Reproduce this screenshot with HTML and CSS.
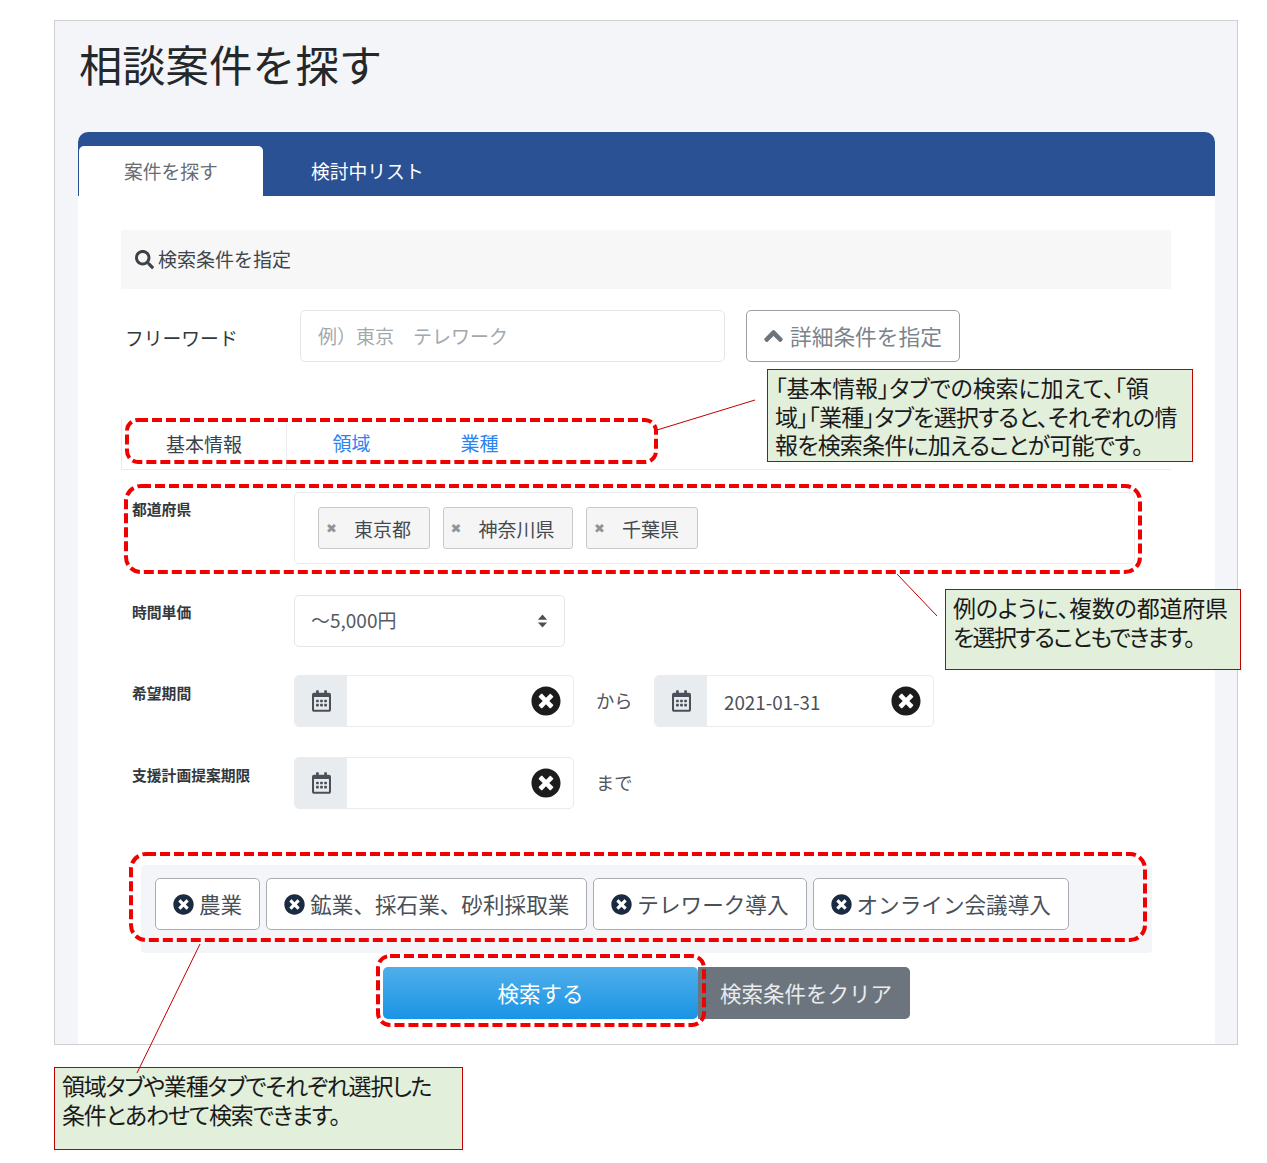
FILE: index.html
```html
<!DOCTYPE html>
<html lang="ja">
<head>
<meta charset="utf-8">
<title>相談案件を探す</title>
<link rel="stylesheet" href="styles.css">
</head>
<body>
<svg class="defs" width="0" height="0" aria-hidden="true">
  <symbol id="i-times" viewBox="0 0 512 512"><path d="M256 8C119 8 8 119 8 256s111 248 248 248 248-111 248-248S393 8 256 8zm121.6 313.1c4.7 4.7 4.7 12.3 0 17L338 377.6c-4.7 4.7-12.3 4.7-17 0L256 312l-65.1 65.6c-4.7 4.7-12.3 4.7-17 0L134.4 338c-4.7-4.7-4.7-12.3 0-17l65.6-65-65.6-65.1c-4.7-4.7-4.7-12.3 0-17l39.6-39.6c4.7-4.7 12.3-4.7 17 0l65 65.7 65.1-65.6c4.7-4.7 12.3-4.7 17 0l39.6 39.6c4.7 4.7 4.7 12.3 0 17L312 256l65.6 65.1z"/></symbol>
  <symbol id="i-cal" viewBox="0 0 448 512"><path d="M148 288h-40c-6.6 0-12-5.4-12-12v-40c0-6.6 5.4-12 12-12h40c6.6 0 12 5.4 12 12v40c0 6.6-5.4 12-12 12zm108-12v-40c0-6.6-5.4-12-12-12h-40c-6.6 0-12 5.4-12 12v40c0 6.6 5.4 12 12 12h40c6.6 0 12-5.4 12-12zm96 0v-40c0-6.6-5.4-12-12-12h-40c-6.6 0-12 5.4-12 12v40c0 6.6 5.4 12 12 12h40c6.6 0 12-5.4 12-12zm-96 96v-40c0-6.6-5.4-12-12-12h-40c-6.6 0-12 5.4-12 12v40c0 6.6 5.4 12 12 12h40c6.6 0 12-5.4 12-12zm-96 0v-40c0-6.6-5.4-12-12-12h-40c-6.6 0-12 5.4-12 12v40c0 6.6 5.4 12 12 12h40c6.6 0 12-5.4 12-12zm192 0v-40c0-6.6-5.4-12-12-12h-40c-6.6 0-12 5.4-12 12v40c0 6.6 5.4 12 12 12h40c6.6 0 12-5.4 12-12zm96-260v352c0 26.5-21.5 48-48 48H48c-26.5 0-48-21.5-48-48V112c0-26.5 21.5-48 48-48h48V12c0-6.6 5.4-12 12-12h40c6.6 0 12 5.4 12 12v52h128V12c0-6.6 5.4-12 12-12h40c6.6 0 12 5.4 12 12v52h48c26.5 0 48 21.5 48 48zm-48 346V160H48v298c0 3.3 2.7 6 6 6h340c3.3 0 6-2.7 6-6z"/></symbol>
</svg>
<div class="page">
  <div class="frame">
    <h1 class="title">相談案件を探す</h1>
    <div class="card">
      <div class="card-tabs">
        <div class="card-tab active">案件を探す</div>
        <div class="card-tab">検討中リスト</div>
      </div>
      <div class="card-body">
        <div class="search-head">
          <svg class="search-icon" viewBox="0 0 512 512"><path d="M505 442.7L405.3 343c-4.5-4.5-10.6-7-17-7H372c27.6-35.3 44-79.7 44-128C416 93.1 322.9 0 208 0S0 93.1 0 208s93.1 208 208 208c48.3 0 92.7-16.4 128-44v16.3c0 6.4 2.5 12.5 7 17l99.7 99.7c9.4 9.4 24.6 9.4 33.9 0l28.3-28.3c9.4-9.4 9.4-24.6.1-34zM208 336c-70.7 0-128-57.2-128-128 0-70.7 57.2-128 128-128 70.7 0 128 57.2 128 128 0 70.7-57.2 128-128 128z"/></svg>
          <span>検索条件を指定</span>
        </div>
        <div class="free-row">
          <div class="free-label">フリーワード</div>
          <div class="free-input">例）東京　テレワーク</div>
          <div class="detail-btn">
            <svg class="chevron" viewBox="0 0 448 512"><path d="M240.971 130.524l194.343 194.343c9.373 9.373 9.373 24.569 0 33.941l-22.667 22.667c-9.357 9.357-24.522 9.375-33.901.04L224 227.495 69.255 381.516c-9.379 9.335-24.544 9.317-33.901-.04l-22.667-22.667c-9.373-9.373-9.373-24.569 0-33.941L207.03 130.525c9.372-9.373 24.568-9.373 33.941-.001z"/></svg>
            <span>詳細条件を指定</span>
          </div>
        </div>
        <div class="sub-tabs">
          <div class="sub-tab current">基本情報</div>
          <div class="sub-tab">領域</div>
          <div class="sub-tab">業種</div>
        </div>
        <div class="form-row pref-row">
          <div class="form-label">都道府県</div>
          <div class="pref-box">
            <div class="pref-chip"><span class="chip-x">✖</span>東京都</div>
            <div class="pref-chip"><span class="chip-x">✖</span>神奈川県</div>
            <div class="pref-chip"><span class="chip-x">✖</span>千葉県</div>
          </div>
        </div>
        <div class="form-row price-row">
          <div class="form-label">時間単価</div>
          <div class="select-box">
            <span>～5,000円</span>
            <svg class="select-arrows" viewBox="0 0 12 14"><path d="M6 0l5 5.500H1zM6 14L1 8.500h10z"/></svg>
          </div>
        </div>
        <div class="form-row date-row">
          <div class="form-label">希望期間</div>
          <div class="date-box">
            <div class="date-addon"><svg class="cal"><use href="#i-cal"/></svg></div>
            <div class="date-value"></div>
            <svg class="date-clear"><use href="#i-times"/></svg>
          </div>
          <div class="date-suffix">から</div>
          <div class="date-box">
            <div class="date-addon"><svg class="cal"><use href="#i-cal"/></svg></div>
            <div class="date-value">2021-01-31</div>
            <svg class="date-clear"><use href="#i-times"/></svg>
          </div>
        </div>
        <div class="form-row limit-row">
          <div class="form-label">支援計画提案期限</div>
          <div class="date-box">
            <div class="date-addon"><svg class="cal"><use href="#i-cal"/></svg></div>
            <div class="date-value"></div>
            <svg class="date-clear"><use href="#i-times"/></svg>
          </div>
          <div class="date-suffix">まで</div>
        </div>
        <div class="tag-area">
          <div class="tag"><svg class="tag-icon"><use href="#i-times"/></svg>農業</div>
          <div class="tag"><svg class="tag-icon"><use href="#i-times"/></svg>鉱業、採石業、砂利採取業</div>
          <div class="tag"><svg class="tag-icon"><use href="#i-times"/></svg>テレワーク導入</div>
          <div class="tag"><svg class="tag-icon"><use href="#i-times"/></svg>オンライン会議導入</div>
        </div>
        <div class="actions">
          <div class="btn-search">検索する</div>
          <div class="btn-clear">検索条件をクリア</div>
        </div>
      </div>
    </div>
  </div>

  <div class="note note-a">
    <span class="line a1">「基本情報」タブでの検索に加えて、「領</span>
    <span class="line a2">域」「業種」タブを選択すると、それぞれの情</span>
    <span class="line a3">報を検索条件に加えることが可能です。</span>
  </div>
  <div class="note note-b">
    <span class="line b1">例のように、複数の都道府県</span>
    <span class="line b2">を選択することもできます。</span>
  </div>
  <div class="note note-c">
    <span class="line c1">領域タブや業種タブでそれぞれ選択した</span>
    <span class="line c2">条件とあわせて検索できます。</span>
  </div>

  <svg class="overlay" viewBox="0 0 1267 1163">
    <g class="dash">
      <rect x="127" y="420" width="529" height="42" rx="11"/>
      <rect x="126" y="486" width="1014" height="86" rx="15"/>
      <rect x="131" y="854" width="1014" height="86" rx="15"/>
      <rect x="378" y="956" width="326" height="69" rx="12"/>
    </g>
    <g class="leader">
      <line x1="657" y1="430" x2="755" y2="400"/>
      <line x1="897" y1="574" x2="937" y2="616"/>
      <line x1="200" y1="944" x2="137" y2="1073"/>
    </g>
  </svg>
</div>
</body>
</html>
```
FILE: styles.css
```css
* { box-sizing: border-box; }
html, body { margin: 0; padding: 0; background: #fff; }
body {
  font-family: "Noto Sans CJK JP", "Noto Sans", sans-serif;
  color: #3c4248;
}
.defs { position: absolute; }
.page { position: relative; width: 1267px; height: 1163px; padding: 20px 0 0 54px; overflow: hidden; }

.frame {
  width: 1184px;
  height: 1025px;
  background: #f4f5f9;
  border: 1px solid #cfcfd2;
  overflow: hidden;
}
.title {
  margin: 0 0 27px;
  padding-left: 24px;
  height: 84px;
  line-height: 84px;
  font-size: 43.300px;
  font-weight: 400;
  color: #25282b;
}
.card { margin-left: 23px; width: 1137px; height: 912px; background: #fff; border-radius: 10px 10px 0 0; overflow: hidden; }
.card-tabs {
  display: flex;
  height: 64px;
  padding: 14px 0 0 1px;
  background: #2a5193;
}
.card-tab {
  width: 184px;
  height: 50px;
  padding: 0 0 0 45px;
  line-height: 50px;
  font-size: 18.800px;
  color: #fff;
  border-radius: 5px 5px 0 0;
}
.card-tab + .card-tab { padding-left: 48px; width: 300px; }
.card-tab.active { background: #fff; color: #666c72; }

.card-body { padding: 34px 44px 0 43px; }
.search-head {
  display: flex;
  align-items: center;
  height: 59px;
  padding: 0 0 2px 14px;
  gap: 4px;
  background: #f7f7f7;
  font-size: 19px;
  color: #40464c;
}
.search-icon { width: 19px; height: 19px; margin-top: 2px; fill: #3c4248; }

.free-row { display: flex; margin-top: 21px; height: 52px; }
.free-label { width: 179px; padding-left: 4px; line-height: 56px; font-size: 18.800px; color: #33383d; }
.free-input {
  width: 425px;
  border: 1px solid #e4e6e9;
  border-radius: 5px;
  padding-left: 17px;
  line-height: 50px;
  font-size: 19px;
  color: #a3a8ad;
}
.detail-btn {
  display: flex;
  align-items: center;
  gap: 7px;
  width: 214px;
  margin-left: 21px;
  padding: 0 0 1px 17px;
  border: 1px solid #9aa0a6;
  border-radius: 5px;
  font-size: 21.700px;
  color: #7b848c;
}
.chevron { width: 19px; height: 20px; fill: #6c757d; stroke: #6c757d; stroke-width: 36; }

.sub-tabs {
  display: flex;
  margin-top: 56px;
  height: 52px;
  border-bottom: 1px solid #ececee;
}
.sub-tab {
  width: 127px;
  text-align: center;
  padding-top: 10px;
  line-height: 30px;
  font-size: 19px;
  color: #2d84f0;
}
.sub-tab.current {
  width: 166px;
  margin-right: 1px;
  padding-top: 11px;
  border-left: 1px solid #ececee;
  border-right: 1px solid #ececee;
  color: #3c4248;
}
.sub-tab.current + .sub-tab + .sub-tab { margin-left: 1px; }

.form-row { display: flex; }
.form-label {
  width: 173px;
  padding-left: 11px;
  font-size: 14.800px;
  font-weight: 700;
  color: #33383d;
}
.pref-row { margin-top: 22px; }
.pref-row .form-label { line-height: 34px; }
.pref-box {
  display: flex;
  gap: 13px;
  width: 841px;
  height: 72px;
  padding: 14px 0 0 23px;
  border: 1px solid #e9ebee;
  border-radius: 5px;
}
.pref-chip {
  display: flex;
  height: 42px;
  padding: 0 17.500px 0 7px;
  align-items: center;
  background: #f5f5f5;
  border: 1px solid #c6c9cc;
  border-radius: 3px;
  font-size: 19px;
  color: #444a50;
}
.chip-x {
  width: 28px;
  font-family: "DejaVu Sans", sans-serif;
  font-size: 13px;
  color: #8f9499;
}

.price-row { margin-top: 31px; }
.price-row .form-label { line-height: 34px; }
.select-box {
  display: flex;
  align-items: center;
  justify-content: space-between;
  width: 271px;
  height: 52px;
  padding: 0 16px 3px 16px;
  border: 1px solid #e4e6e9;
  border-radius: 5px;
  font-size: 19px;
  color: #555b61;
}
.select-arrows { width: 11px; height: 14px; margin-top: 3px; fill: #4a5056; }

.date-row { margin-top: 28px; }
.limit-row { margin-top: 30px; }
.date-row .form-label, .limit-row .form-label { line-height: 36px; }
.date-box {
  position: relative;
  display: flex;
  align-items: center;
  width: 280px;
  height: 52px;
  border: 1px solid #e9ebee;
  border-radius: 5px;
}
.date-addon {
  display: flex;
  align-items: center;
  justify-content: center;
  width: 52px;
  height: 50px;
  background: #e9ecef;
  border-radius: 4px 0 0 4px;
}
.cal { width: 19px; height: 22px; fill: #495057; }
.date-value { flex: 1; padding-left: 17px; font-size: 18.800px; color: #4b5157; }
.date-clear { width: 30px; height: 30px; margin-right: 12px; fill: #1c1c1c; }
.date-suffix { width: 80px; padding-left: 22px; line-height: 50px; font-size: 18.300px; color: #50565c; }

.tag-area {
  display: flex;
  gap: 6px;
  width: 1011px;
  height: 88px;
  margin: 56px 0 0 20px;
  padding: 13px 14px;
  background: #f4f5f9;
  border-radius: 4px;
}
.tag {
  display: flex;
  align-items: center;
  gap: 5px;
  height: 52px;
  padding: 0 17px 2px 17px;
  background: #fff;
  border: 1px solid #a9adb2;
  border-radius: 5px;
  font-size: 21.600px;
  color: #495057;
}
.tag-icon { width: 21px; height: 21px; margin-top: 2px; fill: #1b2b41; }

.actions { display: flex; margin: 14px 0 0 262px; height: 52px; }
.btn-search, .btn-clear {
  line-height: 52px;
  font-size: 21.500px;
  text-align: center;
  border-radius: 5px;
  color: #fff;
}
.btn-search { width: 315px; background: linear-gradient(#50aeea, #1a94e5); }
.btn-clear { width: 212px; padding-left: 4px; background: #6c757d; border-radius: 0 5px 5px 0; color: #e9ecee; }

.overlay { position: absolute; left: 0; top: 0; width: 1267px; height: 1163px; pointer-events: none; }
.dash rect { fill: none; stroke: #f00000; stroke-width: 4; stroke-dasharray: 10 4; }
.leader line { stroke: #c00000; stroke-width: 1; }

.note {
  position: absolute;
  background: #e2efda;
  border: 1px solid #c00000;
  padding: 3px 7px;
  font-size: 23px;
  line-height: 28.500px;
  color: #1a1a1a;
  font-feature-settings: "palt";
  white-space: nowrap;
}
.line { display: block; height: 28.500px; }
.a1 { letter-spacing: -0.100px; }
.a2 { letter-spacing: -0.700px; }
.a3 { letter-spacing: -0.800px; }
.b1 { letter-spacing: -0.200px; }
.b2 { letter-spacing: -1.650px; }
.c1 { letter-spacing: -1.200px; }
.c2 { letter-spacing: -1.150px; }
.note-a { left: 767px; top: 369px; width: 426px; height: 93px; }
.note-b { left: 945px; top: 589px; width: 296px; height: 81px; }
.note-c { left: 54px; top: 1067px; width: 409px; height: 83px; }
```
